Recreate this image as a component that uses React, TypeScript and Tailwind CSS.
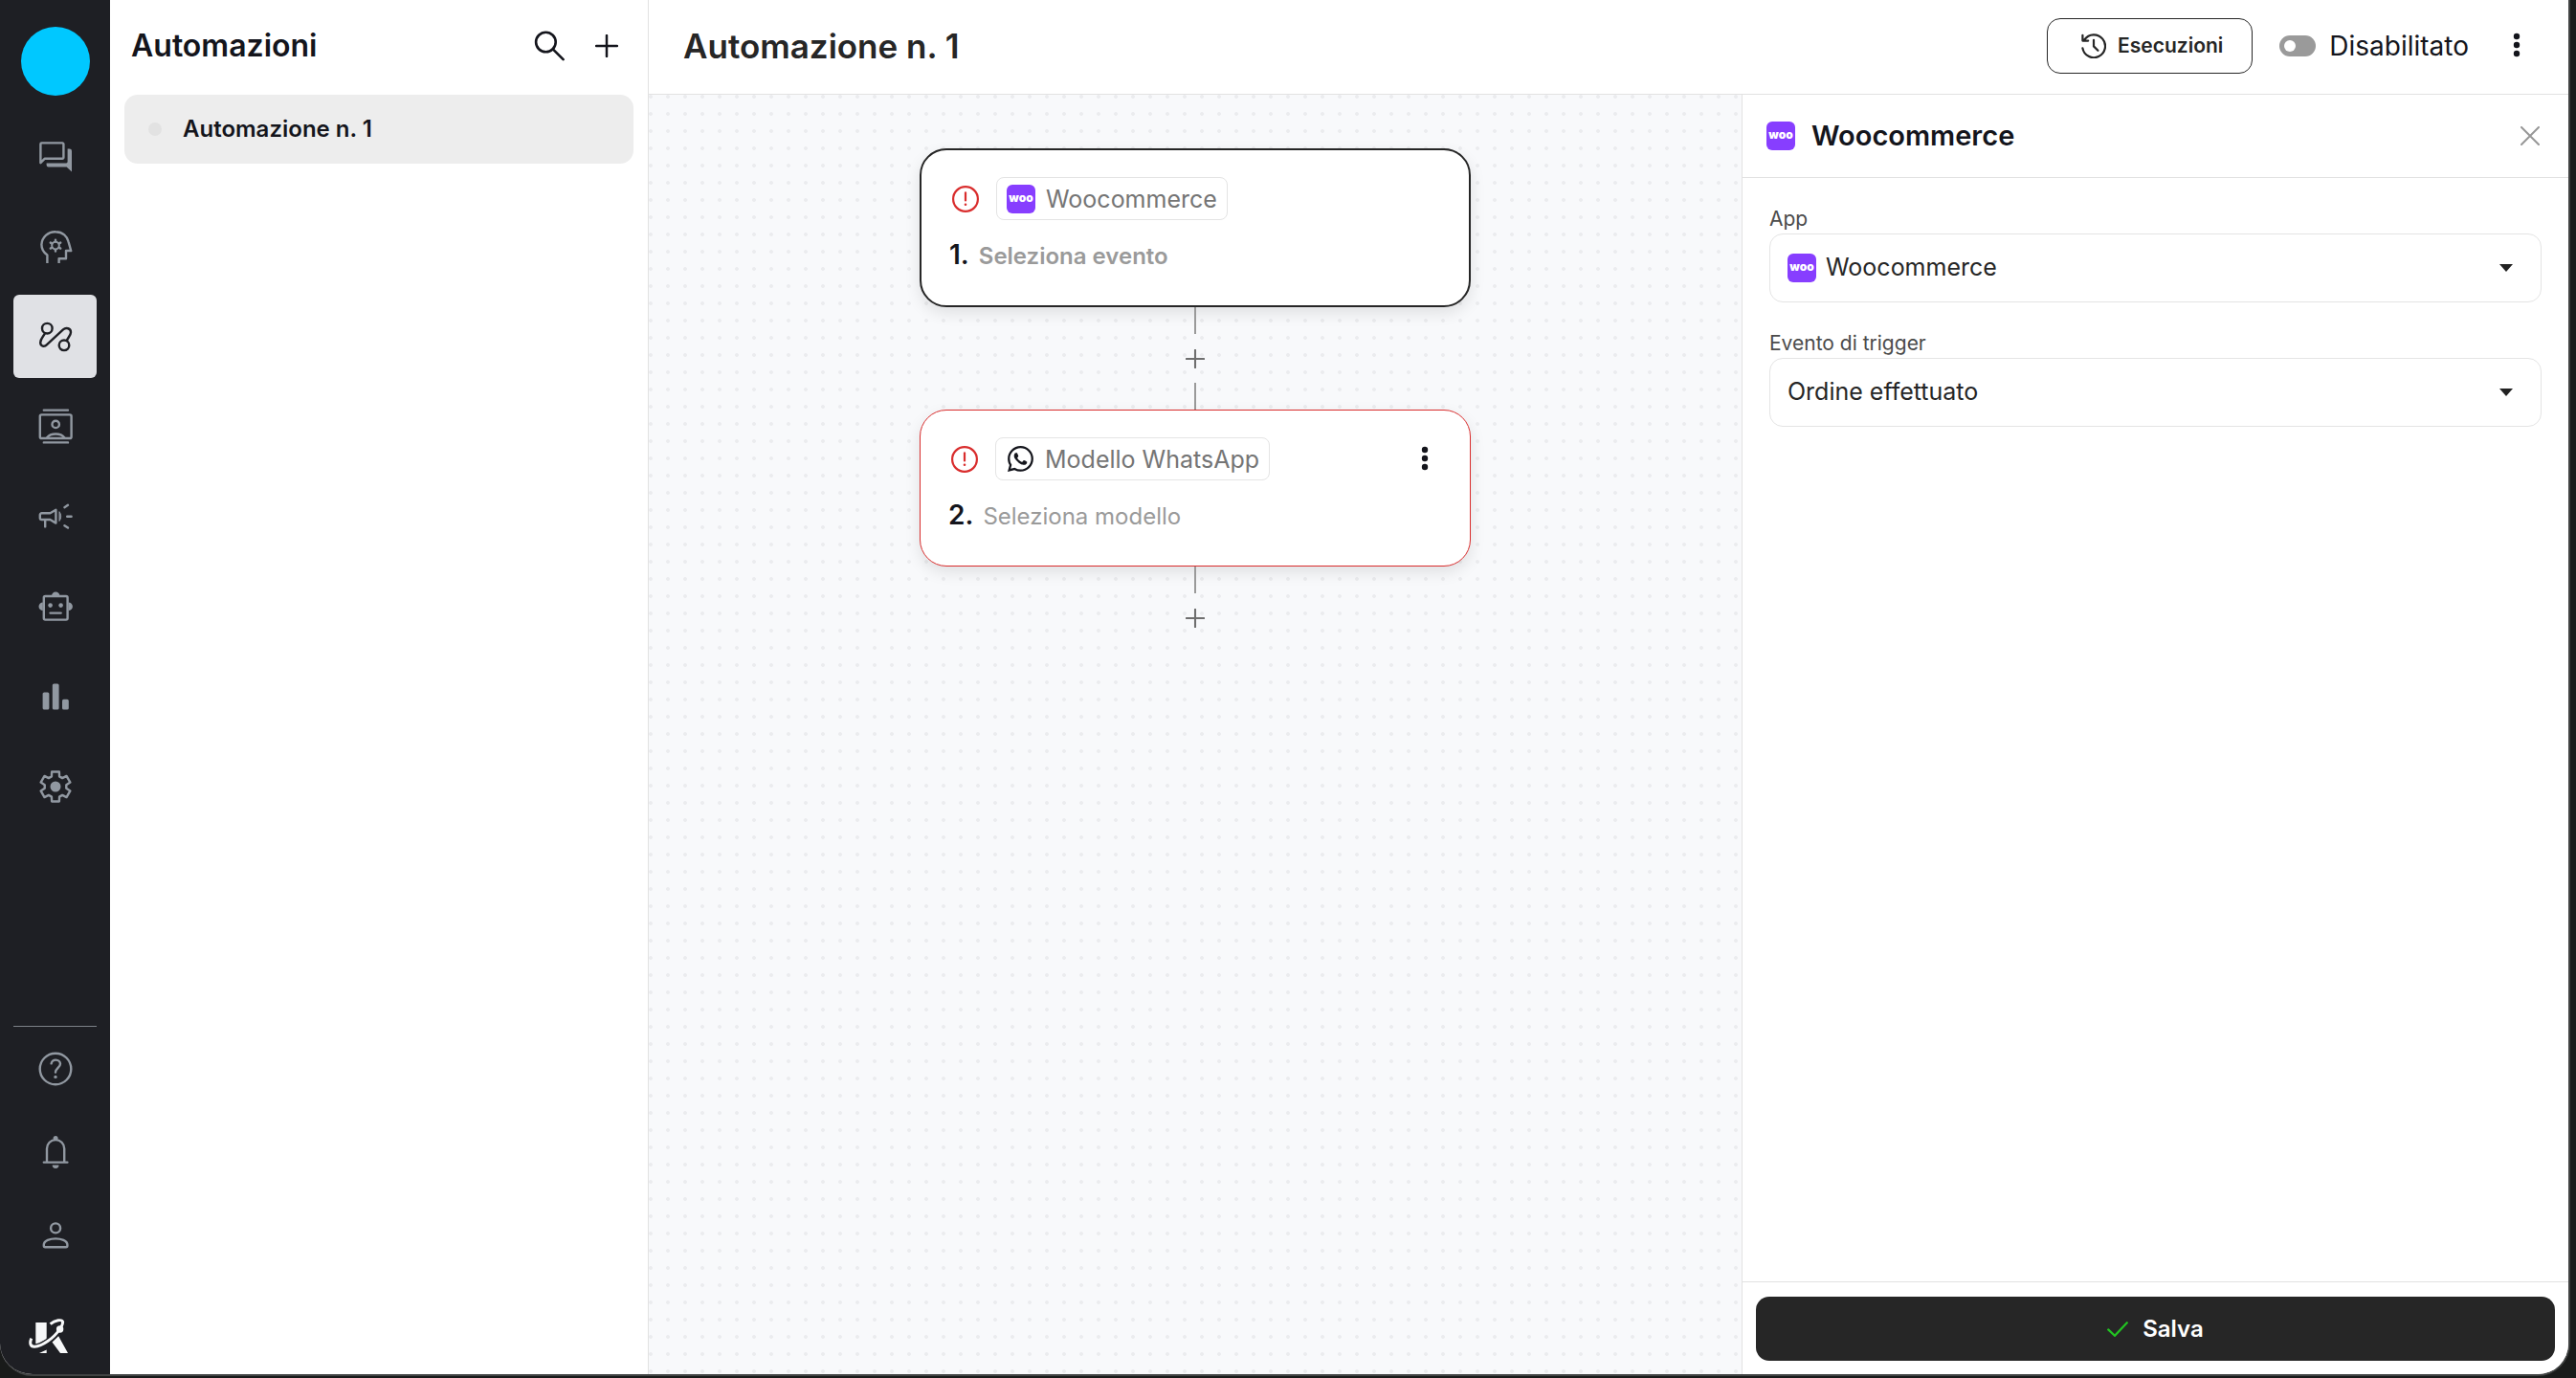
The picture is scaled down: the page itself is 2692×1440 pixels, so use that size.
import type { ReactNode } from "react";
import { BsWhatsapp } from "react-icons/bs";

function Glyph({ children }: { children: ReactNode }) {
  return (
    <svg viewBox="0 0 40 40" className="size-10" fill="none" stroke="currentColor" strokeWidth="2.4" strokeLinecap="round" strokeLinejoin="round" aria-hidden="true">
      {children}
    </svg>
  );
}

function gearPath(cx: number, cy: number, outer: number, inner: number) {
  const points: string[] = [];
  for (let k = 0; k < 6; k++) {
    const steps: [number, number][] = [[inner, -21], [outer, -14], [outer, 14], [inner, 21]];
    for (const [r, offset] of steps) {
      const a = ((k * 60 + offset - 90) * Math.PI) / 180;
      points.push(`${(cx + r * Math.cos(a)).toFixed(2)} ${(cy + r * Math.sin(a)).toFixed(2)}`);
    }
  }
  return `M${points.join("L")}Z`;
}

const mainNav: { label: string; active?: boolean; icon: ReactNode }[] = [
  {
    label: "Conversazioni",
    icon: (
      <>
        <path d="M4.4 26.2V6.6a1.2 1.2 0 0 1 1.2-1.2h21.6a1.2 1.2 0 0 1 1.2 1.2v14a1.2 1.2 0 0 1-1.2 1.2H8.6Z" />
        <path d="M32.6 11.4h2a2.4 2.4 0 0 1 2.4 2.4V35.6l-5.4-5H12.6a2 2 0 0 1-2-2v-2.2h20.6a1.4 1.4 0 0 0 1.4-1.4Z" fill="currentColor" stroke="none" />
      </>
    ),
  },
  {
    label: "Intelligenza artificiale",
    icon: (
      <>
        <path d="M11.4 37v-8.4C7.6 26 5.4 22 5.4 17.600A14.2 14.2 0 0 1 20 4.2c7.6 0 12.4 4.8 13.6 10.6L36.2 24H31v8.2h-7.400V37" strokeLinecap="butt" />
        <circle cx="20" cy="18.6" r="3.8" strokeWidth="2" />
        <path d="M20 12.6v1.600M20 23v1.600M14.8 15.6l1.400.8M23.800 20.800l1.400.8M25.200 15.600l-1.400.8M16.200 20.800l-1.400.8" strokeWidth="2.4" />
      </>
    ),
  },
  {
    label: "Automazioni",
    active: true,
    icon: (
      <>
        <circle cx="11.3" cy="11.2" r="5.3" />
        <circle cx="29" cy="28.8" r="5.3" />
        <path d="M9 16.2C7.4 19.6 4.2 22 4.2 26c0 4 4.2 4.8 6.8 2.2L28 12.4c3-2.6 8-1.4 8 2.8 0 3.2-3 5.4-4.2 8.8" />
      </>
    ),
  },
  {
    label: "Contatti",
    icon: (
      <>
        <path d="M7.8 2.6h25.2M7.8 36.4h25.2" />
        <rect x="3.8" y="7.4" width="32.8" height="24.6" rx="1.6" />
        <circle cx="20.2" cy="17.4" r="3.7" />
        <path d="M11 31.4c4-5.2 14.400-5.2 18.400 0" />
      </>
    ),
  },
  {
    label: "Campagne",
    icon: (
      <>
        <path d="M5.6 16.2h8.8l6-3.4v13.8l-6-3.6H5.6a1.8 1.8 0 0 1-1.8-1.8V18a1.8 1.8 0 0 1 1.8-1.8ZM9.2 23.2V30.4" />
        <path d="M24.2 15c2 2.8 2 6.4 0 9.2Z" fill="currentColor" strokeWidth="1" />
        <path d="M29.4 10.2l3.6-2.4M32.2 19.7h4.4M29.4 29.2l3.6 2.4" />
      </>
    ),
  },
  {
    label: "Chatbot",
    icon: (
      <>
        <rect x="7.8" y="9" width="24.8" height="24.6" rx="1.6" />
        <path d="M16 8.8a4.2 4.2 0 0 1 8.4 0ZM6.8 15.4a4.3 4.3 0 0 0 0 8.6ZM33.6 15.4a4.3 4.3 0 0 1 0 8.6Z" fill="currentColor" stroke="none" />
        <circle cx="14.6" cy="18.6" r="2.3" fill="currentColor" stroke="none" />
        <circle cx="25.6" cy="18.6" r="2.3" fill="currentColor" stroke="none" />
        <path d="M14.6 26.6h11" />
      </>
    ),
  },
  {
    label: "Statistiche",
    icon: (
      <g fill="currentColor" stroke="none">
        <rect x="6.6" y="15.5" width="6.8" height="18" rx="1.6" />
        <rect x="16.8" y="6.5" width="6.8" height="27" rx="1.6" />
        <rect x="27" y="22.8" width="6.8" height="10.7" rx="1.6" />
      </g>
    ),
  },
  {
    label: "Impostazioni",
    icon: (
      <>
        <path d={gearPath(20, 20, 16, 11.4)} />
        <circle cx="20" cy="20" r="5.5" fill="currentColor" stroke="none" />
      </>
    ),
  },
];

const footerNav: { label: string; icon: ReactNode }[] = [
  {
    label: "Aiuto",
    icon: (
      <>
        <circle cx="20" cy="20" r="16.3" />
        <path d="M15.6 14.4c.6-2.6 2.4-3.8 4.6-3.8 2.8 0 4.8 1.8 4.8 4.2 0 3.8-5 4.6-5 8.8" />
        <circle cx="20" cy="28.4" r="1.7" fill="currentColor" stroke="none" />
      </>
    ),
  },
  {
    label: "Notifiche",
    icon: (
      <>
        <path d="M7.8 30.6h24.6M11 30.6V16.2a9.1 9.1 0 0 1 18.2 0V30.6" />
        <circle cx="20.1" cy="5.4" r="2.5" fill="currentColor" stroke="none" />
        <path d="M16.7 33.6h6.8a3.4 3.4 0 0 1-6.8 0Z" fill="currentColor" stroke="none" />
      </>
    ),
  },
  {
    label: "Profilo",
    icon: (
      <>
        <circle cx="20.1" cy="12.4" r="5" />
        <path d="M7.8 29.8c0-4.400 6.800-6.400 12.300-6.400s12.300 2 12.300 6.400v1a1.400 1.400 0 0 1-1.400 1.400H9.200a1.400 1.400 0 0 1-1.400-1.400Z" />
      </>
    ),
  },
];

function BrandMark() {
  return (
    <svg viewBox="0 0 41 36" className="h-9 w-[41px]" fill="none" aria-label="Logo">
      <path d="M7.3 4h11.4v17.5L7.3 28ZM11 36l7.7-3.6V36ZM24.5 24.5 31 18l10 18h-8Z" fill="#f7f8f9" />
      <path d="M3 20.8c-2.6 4.4-2 8.6 3 8.4C14 28.8 26 20.8 32.6 11" stroke="#1e1f24" strokeWidth="6" />
      <path d="M2.8 20.6c-2 4.6-1.4 8.8 3.4 8.6C14 28.8 26 20.6 32.4 11" stroke="#f7f8f9" strokeWidth="3" />
      <path d="M22.6 5.6C27.6 1.4 35 .4 35.6 3.4c.2 2-.8 3.8-1.8 5.6" stroke="#f7f8f9" strokeWidth="3" />
      <circle cx="32.6" cy="11" r="3.7" fill="#f7f8f9" />
    </svg>
  );
}

function WooLogo() {
  return (
    <span className="flex size-[30px] shrink-0 items-center justify-center rounded-md bg-[#873eff] pb-0.5 text-[12px] leading-none font-black text-white" aria-hidden="true">
      woo
    </span>
  );
}

function Plus({ className }: { className: string }) {
  return (
    <svg viewBox="0 0 24 24" className={className} fill="none" stroke="currentColor" strokeLinecap="round" aria-hidden="true">
      <path d="M12 1v22M1 12h22" />
    </svg>
  );
}

function Dots() {
  return (
    <svg viewBox="0 0 28 28" className="size-7" fill="currentColor" aria-hidden="true">
      <circle cx="14" cy="4" r="3.2" />
      <circle cx="14" cy="13" r="3.2" />
      <circle cx="14" cy="22" r="3.2" />
    </svg>
  );
}

function AlertIcon() {
  return (
    <svg viewBox="0 0 28 28" className="mx-[3px] size-7 shrink-0" fill="none" stroke="#d92d2d" strokeWidth="2.2" strokeLinecap="round" role="img" aria-label="Configurazione incompleta">
      <circle cx="14" cy="14" r="12.9" />
      <path d="M14 7.4v8" />
      <circle cx="14" cy="19.8" r="1.3" fill="#d92d2d" stroke="none" />
    </svg>
  );
}

function StepCard({ frame, icon, app, number, children, menu }: { frame: string; icon: ReactNode; app: string; number: string; children: ReactNode; menu?: boolean }) {
  return (
    <article className={`w-[576px] rounded-[28px] bg-white px-[29px] pt-7 pb-[33px] shadow-[0_6px_16px_rgba(0,0,0,0.1)] ${frame}`}>
      <div className="flex items-center">
        <AlertIcon />
        <div className="ml-[15px] flex h-[45px] items-center gap-[11px] rounded-lg border border-[#e4e4e4] px-2.5">
          {icon}
          <span className="text-[25px] leading-9 text-[#757575]">{app}</span>
        </div>
        {menu && (
          <button type="button" aria-label="Opzioni passaggio" className="mr-1 ml-auto text-[#14151c]">
            <Dots />
          </button>
        )}
      </div>
      <div className="mt-[18px] flex items-baseline gap-2.5 leading-9">
        <span className="text-[28px] leading-9 font-semibold text-[#14151c]">{number}</span>
        {children}
      </div>
    </article>
  );
}

function AddStep() {
  return (
    <button type="button" aria-label="Aggiungi passaggio" className="flex h-[51px] w-12 items-center justify-center text-[#6f6f6f]">
      <Plus className="size-5 stroke-[2.5]" />
    </button>
  );
}

function Connector() {
  return <div className="h-7 w-0.5 bg-[#9a9a9a]" />;
}

function SelectField({ id, label, value, icon }: { id: string; label: string; value: string; icon?: ReactNode }) {
  return (
    <div>
      <label htmlFor={id} className="block text-[21px] leading-[30px] text-[#4b4b4b]">
        {label}
      </label>
      <div className="relative flex h-[72px] items-center gap-2.5 rounded-[14px] border border-[#e4e4e4] pl-[18px]">
        {icon}
        <select id={id} defaultValue={value} className="h-full min-w-0 flex-1 appearance-none bg-transparent text-[25px] text-[#262626] outline-none">
          <option>{value}</option>
        </select>
        <svg viewBox="0 0 14 8" className="pointer-events-none absolute right-[29px] h-2 w-3.5" fill="#222222" aria-hidden="true">
          <path d="M0 0h14L7 8Z" />
        </svg>
      </div>
    </div>
  );
}

export default function App() {
  return (
    <div className="flex h-screen bg-[#191b1a] pr-1.5 pb-0.5 font-['Inter',sans-serif] text-[#14151c]">
      <div className="flex min-w-0 flex-1 overflow-hidden rounded-b-[34px] border-r-2 border-b-2 border-[#414343] bg-white">
        <nav aria-label="Principale" className="flex w-[115px] shrink-0 flex-col items-center bg-[#1e1f24] pt-7 pb-[22px] text-[#9198a1]">
          <button type="button" aria-label="Account" className="size-[72px] shrink-0 rounded-full bg-[#00c8ff]" />
          <div className="mt-5 flex flex-col gap-[7px]">
            {mainNav.map((item) => (
              <button
                key={item.label}
                type="button"
                aria-label={item.label}
                className={`flex size-[87px] items-center justify-center rounded-md ${item.active ? "bg-[#e0e1e5] text-[#1e1f24]" : ""}`}
              >
                <Glyph>{item.icon}</Glyph>
              </button>
            ))}
          </div>
          <div className="mt-auto border-t border-[#7d8187]">
            {footerNav.map((item) => (
              <button key={item.label} type="button" aria-label={item.label} className="flex size-[87px] items-center justify-center">
                <Glyph>{item.icon}</Glyph>
              </button>
            ))}
          </div>
          <div className="mt-11 mr-3.5">
            <BrandMark />
          </div>
        </nav>

        <aside className="flex w-[563px] shrink-0 flex-col border-r border-[#e2e2e2]">
          <header className="flex h-[99px] items-center gap-5 pr-[23px] pb-[3px] pl-[22px]">
            <h2 className="mr-auto text-[32px] leading-10 font-semibold">Automazioni</h2>
            <button type="button" aria-label="Cerca" className="flex size-10 items-center justify-center">
              <svg viewBox="0 0 32 32" className="size-8" fill="none" stroke="currentColor" strokeWidth="2.6" strokeLinecap="round" aria-hidden="true">
                <circle cx="12.4" cy="12" r="10.3" />
                <path d="M19.8 19.4 30.6 30.2" />
              </svg>
            </button>
            <button type="button" aria-label="Nuova automazione" className="flex size-10 items-center justify-center">
              <Plus className="size-6 stroke-[2.5]" />
            </button>
          </header>
          <ul className="px-[15px]">
            <li>
              <button type="button" className="flex h-[72px] w-full items-center gap-[22px] rounded-[14px] bg-[#ededed] px-[25px] text-left text-[24px] font-semibold">
                <span className="size-3.5 rounded-full bg-[#e2e2e2]" />
                Automazione n. 1
              </button>
            </li>
          </ul>
        </aside>

        <main className="flex min-w-0 flex-1 flex-col">
          <header className="flex h-[99px] shrink-0 items-center border-b border-[#e2e2e2] pr-10 pb-0.5 pl-9">
            <h1 className="mr-auto text-[35px] leading-10 font-semibold text-[#262626]">Automazione n. 1</h1>
            <button type="button" className="flex h-[58px] items-center gap-3 rounded-[14px] border border-[#262626] pr-[30px] pl-[35px] text-[21px] font-semibold text-[#262626]">
              <svg viewBox="0 0 26 26" className="size-[26px]" fill="none" stroke="currentColor" strokeWidth="2.2" strokeLinecap="round" strokeLinejoin="round" aria-hidden="true">
                <path d="M1.4 15.4A11.9 11.9 0 1 0 3.4 6.4M1.4 1.8V7.6H7.2M13 6.8V13.4l4.4 4.4" />
              </svg>
              Esecuzioni
            </button>
            <label className="ml-7 flex items-center gap-3.5 text-[28px] leading-9">
              <input
                type="checkbox"
                role="switch"
                className="flex h-[22px] w-[38px] appearance-none items-center rounded-full bg-[#9a9a9a] pl-[5px] before:size-3 before:rounded-full before:bg-white before:content-['']"
              />
              Disabilitato
            </label>
            <button type="button" aria-label="Altre opzioni" className="ml-9">
              <Dots />
            </button>
          </header>

          <div className="flex min-h-0 flex-1">
            <section
              aria-label="Flusso"
              className="flex min-w-0 flex-1 flex-col items-center bg-[#f8f9fb] bg-[radial-gradient(circle_at_2px_2px,#ebecee_1.5px,transparent_2.3px)] bg-[length:18px_18px] pt-14"
            >
              <StepCard frame="border-2 border-[#262626]" icon={<WooLogo />} app="Woocommerce" number="1.">
                <span className="text-[24px] leading-9 font-semibold text-[#9a9a9a]">Seleziona evento</span>
              </StepCard>
              <Connector />
              <AddStep />
              <Connector />
              <StepCard
                frame="border border-[#d92d2d]"
                icon={
                  <span className="flex size-[30px] items-center justify-center">
                    <BsWhatsapp className="size-[27px]" aria-hidden="true" />
                  </span>
                }
                app="Modello WhatsApp"
                number="2."
                menu
              >
                <span className="text-[24px] leading-9 text-[#9a9a9a]">Seleziona modello</span>
              </StepCard>
              <Connector />
              <AddStep />
            </section>

            <section aria-label="Dettagli passaggio" className="flex w-[864px] max-w-1/2 shrink-0 flex-col border-l border-[#e2e2e2] bg-white">
              <header className="flex h-[87px] shrink-0 items-center gap-[17px] border-b border-[#e2e2e2] pr-6 pl-[25px]">
                <WooLogo />
                <h2 className="mr-auto text-[29px] leading-10 font-semibold">Woocommerce</h2>
                <button type="button" aria-label="Chiudi" className="flex size-8 items-center justify-center text-[#979797]">
                  <svg viewBox="0 0 20 20" className="size-5" fill="none" stroke="currentColor" strokeWidth="2" strokeLinecap="round" aria-hidden="true">
                    <path d="M1 1 19 19M19 1 1 19" />
                  </svg>
                </button>
              </header>
              <div className="flex flex-1 flex-col gap-7 px-7 pt-7">
                <SelectField id="app" label="App" value="Woocommerce" icon={<WooLogo />} />
                <SelectField id="trigger" label="Evento di trigger" value="Ordine effettuato" />
              </div>
              <footer className="border-t border-[#e2e2e2] px-3.5 pt-[15px] pb-3.5">
                <button type="button" className="flex h-[67px] w-full items-center justify-center gap-[15px] rounded-[14px] bg-[#262626] text-[24px] font-semibold text-white">
                  <svg viewBox="0 0 22 16" className="h-4 w-[22px]" fill="none" stroke="#22c322" strokeWidth="2.2" strokeLinecap="round" aria-hidden="true">
                    <path d="M1.2 8.4 8 14.8 20.8 1.2" />
                  </svg>
                  Salva
                </button>
              </footer>
            </section>
          </div>
        </main>
      </div>
    </div>
  );
}
